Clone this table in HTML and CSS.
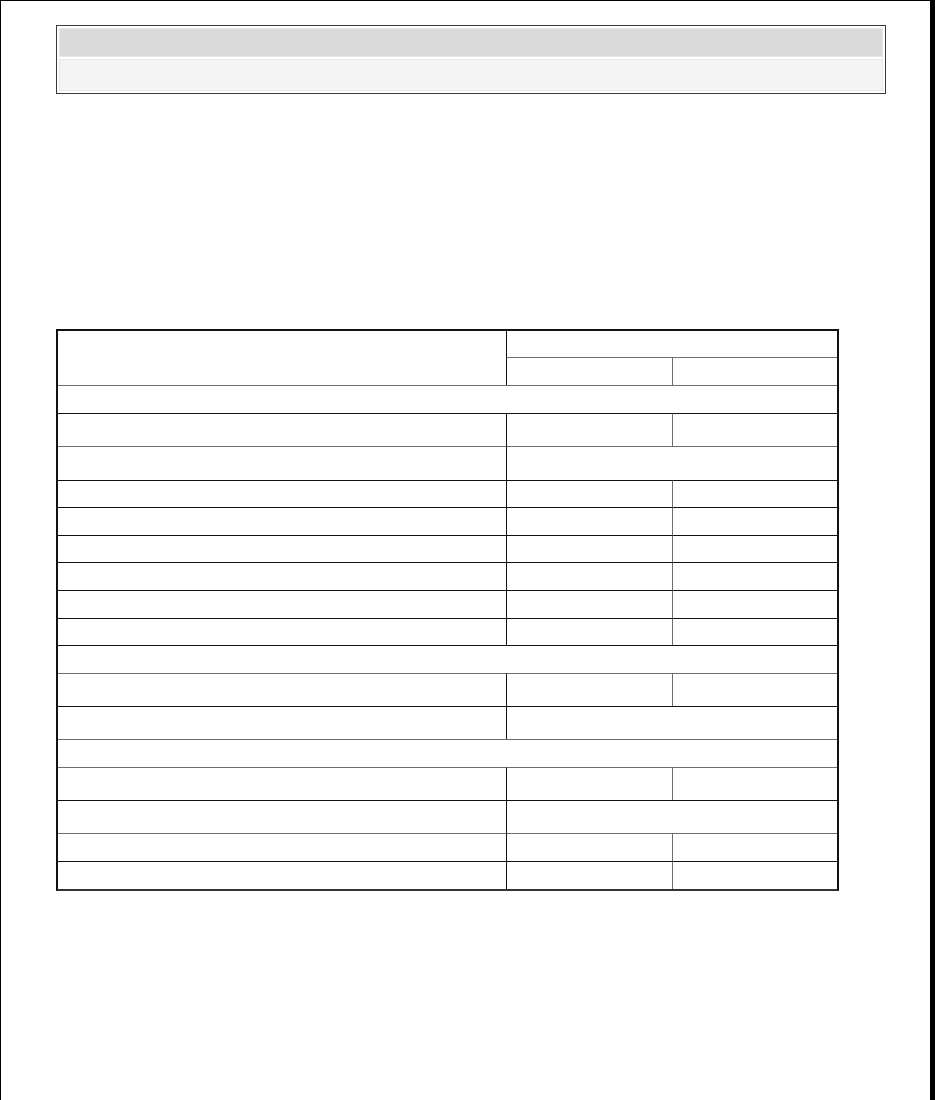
FILE: index.html
```html
<!DOCTYPE html>
<html lang="en">
<head>
<meta charset="utf-8">
<title>Specification</title>
<link rel="stylesheet" href="styles.css">
</head>
<body>
<div class="page">
  <div class="banner">
    <div class="band band-dark"></div>
    <div class="band band-light"></div>
  </div>

  <table class="spec">
    <colgroup>
      <col class="c-name">
      <col class="c-val">
      <col class="c-val2">
    </colgroup>
    <tbody>
      <tr class="h26">
        <td class="first" rowspan="2"></td>
        <td class="mid" colspan="2"></td>
      </tr>
      <tr class="h28 gray">
        <td class="mid"></td>
        <td class="last"></td>
      </tr>
      <tr class="h28 gray">
        <td class="first" colspan="3"></td>
      </tr>
      <tr class="h33">
        <td class="first"></td><td class="mid"></td><td class="last"></td>
      </tr>
      <tr class="h34 gray">
        <td class="first"></td><td class="mid" colspan="2"></td>
      </tr>
      <tr class="h27">
        <td class="first"></td><td class="mid"></td><td class="last"></td>
      </tr>
      <tr class="h28">
        <td class="first"></td><td class="mid"></td><td class="last"></td>
      </tr>
      <tr class="h27">
        <td class="first"></td><td class="mid"></td><td class="last"></td>
      </tr>
      <tr class="h28">
        <td class="first"></td><td class="mid"></td><td class="last"></td>
      </tr>
      <tr class="h28">
        <td class="first"></td><td class="mid"></td><td class="last"></td>
      </tr>
      <tr class="h27">
        <td class="first"></td><td class="mid"></td><td class="last"></td>
      </tr>
      <tr class="h28">
        <td class="first" colspan="3"></td>
      </tr>
      <tr class="h33 gray">
        <td class="first"></td><td class="mid"></td><td class="last"></td>
      </tr>
      <tr class="h33">
        <td class="first"></td><td class="mid" colspan="2"></td>
      </tr>
      <tr class="h28 gray">
        <td class="first" colspan="3"></td>
      </tr>
      <tr class="h33 gray">
        <td class="first"></td><td class="mid"></td><td class="last"></td>
      </tr>
      <tr class="h33">
        <td class="first"></td><td class="mid" colspan="2"></td>
      </tr>
      <tr class="h28 gray">
        <td class="first"></td><td class="mid"></td><td class="last"></td>
      </tr>
      <tr class="h28">
        <td class="first"></td><td class="mid"></td><td class="last"></td>
      </tr>
    </tbody>
  </table>
</div>
</body>
</html>
```

FILE: styles.css
```css
html, body {
  margin: 0;
  padding: 0;
  background: #ffffff;
  font-family: "Liberation Sans", Arial, sans-serif;
}

.page {
  box-sizing: border-box;
  width: 935px;
  height: 1100px;
  border-top: 1px solid #000;
  border-left: 1px solid #000;
  border-right: 5px solid #000;
  padding-top: 24px;
  padding-left: 55px;
  overflow: hidden;
}

.banner {
  box-sizing: border-box;
  width: 830px;
  border: 1px solid #3a3a3a;
  padding: 2px;
  display: flex;
  flex-direction: column;
  gap: 2px;
}

.band {
  box-sizing: border-box;
  border: 1px solid #e8e8e8;
}

.band-dark {
  height: 29px;
  background: #dadada;
}

.band-light {
  height: 32px;
  background: #f4f4f4;
}

.spec {
  margin-top: 235px;
  width: 783px;
  table-layout: fixed;
  border-collapse: separate;
  border-spacing: 0;
  border: 2px solid #111;
  border-bottom-color: #333;
}

.c-name { width: 448px; }
.c-val { width: 166px; }
.c-val2 { width: 165px; }

.spec td {
  padding: 0;
  border-top: 1px solid #111;
}

.spec tr:first-child td {
  border-top: none;
}

.spec tr.gray td {
  border-top-color: #6e6e6e;
}

.spec td.mid {
  border-left: 1px solid #111;
}

.spec td.last {
  border-left: 1px solid #6e6e6e;
}

.h26 { height: 26px; }
.h27 { height: 27px; }
.h28 { height: 28px; }
.h33 { height: 33px; }
.h34 { height: 34px; }
```
